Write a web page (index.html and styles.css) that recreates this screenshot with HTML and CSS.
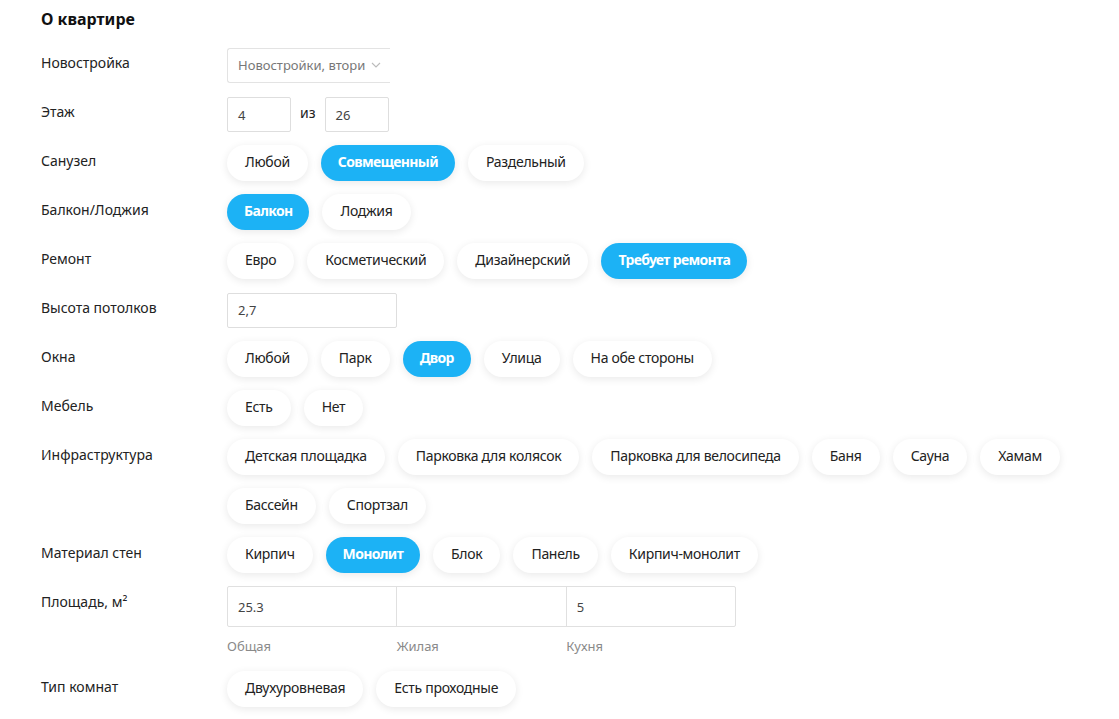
FILE: index.html
```html
<!DOCTYPE html>
<html lang="ru">
<head>
    <meta charset="UTF-8">
    <meta name="viewport" content="width=device-width, initial-scale=1.0">
    <title>О квартире</title>
    <link rel="stylesheet" href="styles.css">
</head>
<body>
    <div class="container">
        <h2 class="title">О квартире</h2>

        <div class="row">
            <div class="label">Новостройка</div>
            <div class="field">
                <div class="select">
                    <span class="select-text">Новостройки, втори</span>
                    <svg class="chevron" width="10" height="6" viewBox="0 0 10 6"><path d="M1 1l4 4 4-4" fill="none" stroke="#bbb" stroke-width="1.1"/></svg>
                </div>
            </div>
        </div>

        <div class="row">
            <div class="label">Этаж</div>
            <div class="field">
                <div class="input small">4</div>
                <span class="between">из</span>
                <div class="input small">26</div>
            </div>
        </div>

        <div class="row">
            <div class="label">Санузел</div>
            <div class="chips">
                <span class="chip">Любой</span>
                <span class="chip active">Совмещенный</span>
                <span class="chip">Раздельный</span>
            </div>
        </div>

        <div class="row">
            <div class="label">Балкон/Лоджия</div>
            <div class="chips">
                <span class="chip active">Балкон</span>
                <span class="chip">Лоджия</span>
            </div>
        </div>

        <div class="row">
            <div class="label">Ремонт</div>
            <div class="chips">
                <span class="chip">Евро</span>
                <span class="chip">Косметический</span>
                <span class="chip">Дизайнерский</span>
                <span class="chip active">Требует ремонта</span>
            </div>
        </div>

        <div class="row">
            <div class="label">Высота потолков</div>
            <div class="field">
                <div class="input wide">2,7</div>
            </div>
        </div>

        <div class="row">
            <div class="label">Окна</div>
            <div class="chips">
                <span class="chip">Любой</span>
                <span class="chip">Парк</span>
                <span class="chip active">Двор</span>
                <span class="chip">Улица</span>
                <span class="chip">На обе стороны</span>
            </div>
        </div>

        <div class="row">
            <div class="label">Мебель</div>
            <div class="chips">
                <span class="chip">Есть</span>
                <span class="chip">Нет</span>
            </div>
        </div>

        <div class="row">
            <div class="label">Инфраструктура</div>
            <div class="chips">
                <span class="chip">Детская площадка</span>
                <span class="chip">Парковка для колясок</span>
                <span class="chip">Парковка для велосипеда</span>
                <span class="chip">Баня</span>
                <span class="chip">Сауна</span>
                <span class="chip">Хамам</span>
                <span class="chip">Бассейн</span>
                <span class="chip">Спортзал</span>
            </div>
        </div>

        <div class="row">
            <div class="label">Материал стен</div>
            <div class="chips">
                <span class="chip">Кирпич</span>
                <span class="chip active">Монолит</span>
                <span class="chip">Блок</span>
                <span class="chip">Панель</span>
                <span class="chip">Кирпич-монолит</span>
            </div>
        </div>

        <div class="row">
            <div class="label">Площадь, м²</div>
            <div class="area">
                <div class="area-inputs">
                    <div class="area-cell">25.3</div>
                    <div class="area-cell"></div>
                    <div class="area-cell">5</div>
                </div>
                <div class="area-captions">
                    <span>Общая</span>
                    <span>Жилая</span>
                    <span>Кухня</span>
                </div>
            </div>
        </div>

        <div class="row">
            <div class="label">Тип комнат</div>
            <div class="chips">
                <span class="chip">Двухуровневая</span>
                <span class="chip">Есть проходные</span>
            </div>
        </div>
    </div>
</body>
</html>
```

FILE: styles.css
```css
body {
    margin: 0;
    background-color: #ffffff;
    color: #222222;
    font-family: 'Noto Sans', 'Open Sans', sans-serif;
    font-size: 14px;
}
.container {
    padding: 7px 0 0 41px;
}
.title {
    font-size: 16px;
    font-weight: 700;
    line-height: 24px;
    margin: 0 0 16px 0;
    color: #111;
}
.row {
    display: flex;
    margin-bottom: 13px;
}
.label {
    width: 186px;
    flex-shrink: 0;
    line-height: 20px;
    padding-top: 6px;
}
.field {
    display: flex;
    align-items: center;
    height: 36px;
}
.select {
    width: 163px;
    height: 35px;
    box-sizing: border-box;
    border: 1px solid #e3e3e3;
    border-right: none;
    border-radius: 3px 0 0 3px;
    display: flex;
    align-items: center;
    padding: 0 0 0 10px;
}
.select-text {
    color: #777;
    font-size: 13px;
    white-space: nowrap;
    width: 125px;
}
.chevron {
    margin-left: 8px;
}
.input {
    height: 35px;
    box-sizing: border-box;
    border: 1px solid #dedede;
    border-radius: 2px;
    padding: 0 10px;
    display: flex;
    align-items: center;
    font-size: 13px;
    color: #444;
}
.input.small {
    width: 64px;
    padding-top: 2px;
}
.input.wide {
    width: 170px;
}
.between {
    margin: 0 9px 0 9px;
    font-size: 14px;
    padding-bottom: 4px;
}
.chips {
    display: flex;
    flex-wrap: wrap;
    gap: 13px;
    max-width: 860px;
}
.chip {
    height: 36px;
    line-height: 34px;
    padding: 0 18px;
    border-radius: 18px;
    background: #ffffff;
    box-shadow: 0 2px 9px rgba(0, 0, 0, 0.09);
    white-space: nowrap;
    letter-spacing: -0.3px;
}
.chip.active {
    padding: 0 17px;
    background: #1cb2f5;
    color: #ffffff;
    font-weight: 700;
    letter-spacing: -0.65px;
}
.area-inputs {
    display: flex;
    width: 509px;
    height: 41px;
    box-sizing: border-box;
    border: 1px solid #e0e0e0;
    border-radius: 2px;
}
.area-cell {
    flex: 1;
    padding: 0 10px;
    display: flex;
    align-items: center;
    font-size: 13px;
    color: #444;
    border-left: 1px solid #e0e0e0;
}
.area-cell:first-child {
    border-left: none;
}
.area-captions {
    display: flex;
    width: 509px;
    margin-top: 10px;
    margin-bottom: 3px;
    line-height: 18px;
}
.area-captions span {
    flex: 1;
    font-size: 13px;
    color: #8a8a8a;
}
```
